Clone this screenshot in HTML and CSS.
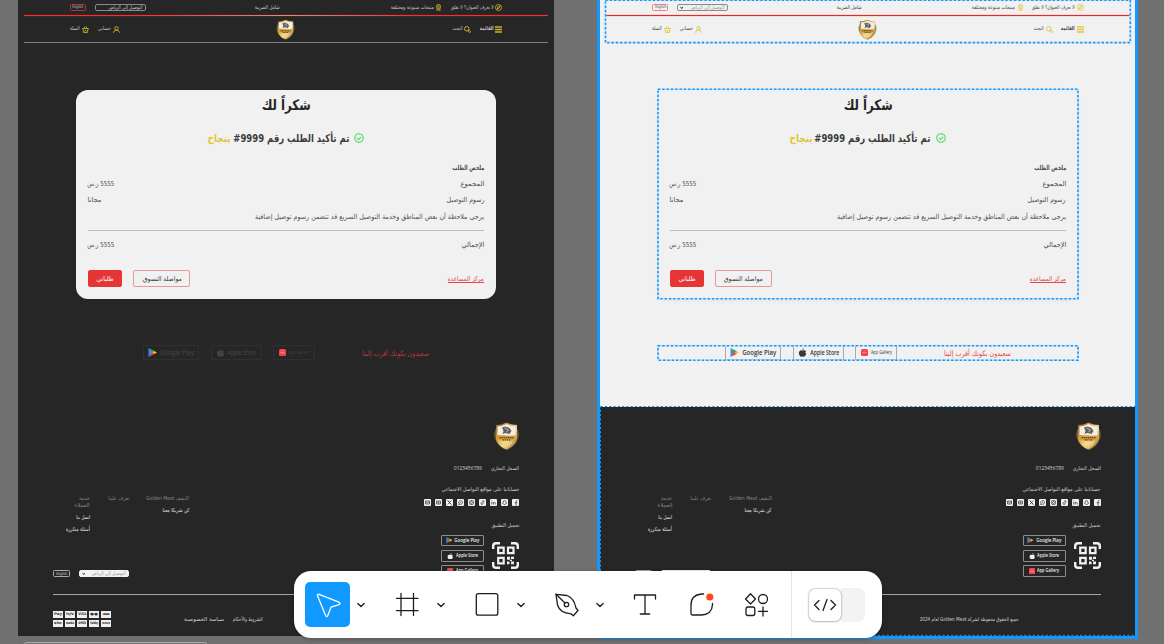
FILE: index.html
```html
<!DOCTYPE html>
<html lang="ar">
<head>
<meta charset="utf-8">
<title>Golden Meat</title>
<link rel="stylesheet" href="styles.css">
</head>
<body>
<svg width="0" height="0" class="defs">
  <defs>
    <linearGradient id="gold" x1="0" y1="0" x2="1" y2="1"><stop offset="0" stop-color="#8a6428"/><stop offset=".35" stop-color="#d9a441"/><stop offset=".6" stop-color="#f3d78c"/><stop offset="1" stop-color="#8a5a1c"/></linearGradient>
    <symbol id="logo" viewBox="0 0 26 28">
      <path d="M2 7Q-1 14 3 20Q7 26 13 28Q19 26 23 20Q27 14 24 7Z" fill="#8b6a35" opacity=".8"/>
      <path d="M2.500 3Q8 3 13 .5Q18 3 23.500 3V17Q22 24 13 27.500Q4 24 2.500 17Z" fill="url(#gold)"/>
      <path d="M4 4.500Q9 4 13 2Q17 4 22 4.500V13H4Z" fill="#f0eeea"/>
      <path d="M8.500 5.500L12 4.500L16 6L18 9L16 12L12 11L9 12L10 9Z" fill="#65605a"/>
      <path d="M11 6L15 8L13 10" stroke="#ddd" stroke-width=".7" fill="none"/>
      <path d="M4 14H22L21 18H5Z" fill="#d6a03e"/><path d="M6 15.800H20M9 18H17" stroke="#3c2a10" stroke-width="1.100" stroke-dasharray="1.500 .6"/>
      <path d="M6 19.500Q9 24 13 26Q18 23 20 19.500Z" fill="#f7d98a" opacity=".7"/>
    </symbol>
    <symbol id="compass" viewBox="0 0 14 14"><g fill="none" stroke="currentColor" stroke-width="1.700"><circle cx="7" cy="7" r="6"/><path d="M10 4L8.200 8.200L4 10L5.800 5.800Z"/></g></symbol>
    <symbol id="award" viewBox="0 0 14 14"><g fill="none" stroke="currentColor" stroke-width="1.700"><circle cx="7" cy="5" r="4.200"/><circle cx="7" cy="5" r="1.500"/><path d="M4 8.500V13.200L7 11.500L10 13.200V8.500"/></g></symbol>
    <symbol id="user" viewBox="0 0 14 14"><g fill="none" stroke="currentColor" stroke-width="1.800"><circle cx="7" cy="4.500" r="3.400"/><path d="M1 13.500Q1.500 8.500 7 8Q12.500 8.500 13 13.500"/></g></symbol>
    <symbol id="basket" viewBox="0 0 14 14"><g fill="none" stroke="currentColor" stroke-width="1.700"><path d="M.5 5H13.500M2 5L3 13H11L12 5M4 5L6 1M10 5L8 1M5.500 8L8.500 11M8.500 8L5.500 11"/></g></symbol>
    <symbol id="search" viewBox="0 0 14 14"><g fill="none" stroke="currentColor" stroke-width="1.900"><circle cx="5.500" cy="5.500" r="4.500"/><path d="M8.800 8.800L10.500 8.500L13.300 11.500L11.500 13.300L8.500 10.500Z"/></g></symbol>
    <symbol id="menu" viewBox="0 0 14 14"><path d="M0 2H14M0 7H14M0 12H14" stroke="currentColor" stroke-width="2.600"/></symbol>
    <symbol id="check" viewBox="0 0 18 18"><g fill="none" stroke="#49dc56" stroke-width="2"><circle cx="9" cy="9" r="7.600"/><path d="M5.300 9.300L8 11.800L12.800 6.800"/></g></symbol>
    <symbol id="play" viewBox="0 0 18 18"><path d="M1 0L9.500 9L1 18Z" fill="#4285f4"/><path d="M1 0L14 6.600L9.500 10Z" fill="#34a853"/><path d="M1 18L14 11.400L9.500 8Z" fill="#ea4335"/><path d="M12.500 5.800L18 9L12.500 12.200L9 9Z" fill="#fbbc04"/></symbol>
    <symbol id="apple" viewBox="0 0 18 18"><path d="M12 0Q12 3.500 8.800 4Q9 1 12 0ZM9 5.200Q13 3 16 6Q13 8.500 16.500 12Q14 17.500 11.500 17.500Q9 16.500 7 17.500Q4 18 2 12.500Q.5 7 4.500 5Q7 4.300 9 5.200Z" fill="currentColor"/></symbol>
    <symbol id="gallery" viewBox="0 0 18 18"><rect width="18" height="18" rx="4" fill="#f4434c"/><path d="M4 9.500H14" stroke="#ffd2d4" stroke-width="2" stroke-dasharray="2 .6"/><path d="M6 3.500Q9 7 12 3.500" fill="none" stroke="#ffa2a6"/></symbol>
    <symbol id="qr" viewBox="0 0 27 27"><g fill="none" stroke="#f1f1f1" stroke-width="2.400"><path d="M1.200 7V4Q1.200 1.200 4 1.200H8M19 1.200H23Q25.800 1.200 25.800 4V7M25.800 20V23Q25.800 25.800 23 25.800H19M8 25.800H4Q1.200 25.800 1.200 23V20"/><path d="M6.200 5.700H11.700V11.200H6.200ZM16 5.700H21.500V11.200H16ZM6.200 15.800H11.700V21.300H6.200Z" stroke-width="2.200"/></g><path d="M15 14.800H18V17.800H15ZM19 14.800H22V17H19ZM18 17.800H20V19H18ZM15 19.500H17.500V22.300H15ZM19 19.500H22V22.300H19Z" fill="#f1f1f1"/></symbol>
    <symbol id="caret" viewBox="0 0 8 8"><path d="M1 2L4 6L7 2" fill="none" stroke="currentColor" stroke-width="2"/></symbol>
  </defs>
</svg>

<template id="page">
  <header class="head">
    <div class="bar top">
      <span class="pill red"><b data-w="11">English</b></span>
      <span class="select"><svg><use href="#caret"/></svg><b data-w="34">التوصيل إلى الرياض</b></span>
      <b class="vat" data-w="25">شامل الضريبة</b>
      <span class="item award"><b data-w="43">منتجات متنوعة ومختلفة</b><svg><use href="#award"/></svg></span>
      <span class="item"><b data-w="43">لا تعرف العنوان؟ لا تقلق</b><svg><use href="#compass"/></svg></span>
    </div>
    <div class="stripe"></div>
    <div class="bar nav">
      <span class="item"><b data-w="10">السلة</b><svg><use href="#basket"/></svg></span>
      <span class="item account"><b data-w="13">حسابي</b><svg><use href="#user"/></svg></span>
      <svg class="brand"><use href="#logo"/></svg>
      <span class="item find"><b data-w="10">البحث</b><svg><use href="#search"/></svg></span>
      <span class="item"><b class="strong" data-w="14">القائمة</b><svg><use href="#menu"/></svg></span>
    </div>
  </header>
  <main class="card">
    <div class="title"><b data-w="49">شكراً لك</b></div>
    <div class="confirm"><b class="gold" data-w="23">بنجاح</b><b data-w="116">تم تأكيد الطلب رقم 9999#</b><svg><use href="#check"/></svg></div>
    <div class="line end"><b class="strong" data-w="32">ملخص الطلب</b></div>
    <div class="line"><b data-w="27">5555 ر.س</b><b data-w="24">المجموع</b></div>
    <div class="line"><b data-w="14">مجانا</b><b data-w="38">رسوم التوصيل</b></div>
    <div class="line end"><b data-w="229">يرجى ملاحظة أن بعض المناطق وخدمة التوصيل السريع قد تتضمن رسوم توصيل إضافية</b></div>
    <div class="line total"><b data-w="27">5555 ر.س</b><b data-w="23">الإجمالي</b></div>
    <div class="actions">
      <span class="btn solid"><b data-w="17">طلباتي</b></span>
      <span class="btn"><b data-w="39">مواصلة التسوق</b></span>
      <span class="help"><b data-w="36">مركز المساعدة</b></span>
    </div>
  </main>
  <section class="apps">
    <span class="app google"><svg><use href="#play"/></svg><b data-w="34">Google Play</b></span>
    <span class="app store"><svg><use href="#apple"/></svg><b data-w="29">Apple Store</b></span>
    <span class="app huawei"><svg><use href="#gallery"/></svg><b data-w="21">App Gallery</b></span>
    <b class="happy" data-w="67">سعيدون بكونك أقرب إلينا</b>
  </section>
  <footer class="foot">
    <div class="upper">
      <div class="side">
        <div class="links">
          <div class="col c1"><b class="dim" data-w="11">خدمة</b><b class="dim" data-w="15">العملاء</b><b class="link" data-w="14">اتصل بنا</b><b class="link" data-w="24">أسئلة متكررة</b></div>
          <div class="col c2"><b class="dim" data-w="21">تعرف علينا</b></div>
          <div class="col c3"><b class="dim" data-w="43">اكتشف Golden Meat</b><b class="link" data-w="27">كن شريكا معنا</b></div>
        </div>
        <div class="prefs"><span class="pill"><b data-w="11">English</b></span><span class="select white"><svg><use href="#caret"/></svg><b data-w="34">التوصيل إلى الرياض</b></span></div>
      </div>
      <div class="about">
        <svg class="crest"><use href="#logo"/></svg>
        <div class="reg"><b data-w="28">0123456789</b><b data-w="28">السجل التجاري</b></div>
        <div class="follow"><b data-w="78">حساباتنا على مواقع التواصل الاجتماعي</b></div>
        <div class="social"></div>
        <div class="dl"><b data-w="28">تحميل التطبيق</b></div>
        <div class="get">
          <div class="stack">
            <span class="badge"><svg><use href="#play"/></svg><b data-w="25">Google Play</b></span>
            <span class="badge"><svg><use href="#apple"/></svg><b data-w="22">Apple Store</b></span>
            <span class="badge"><svg><use href="#gallery"/></svg><b data-w="22">App Gallery</b></span>
          </div>
          <svg class="qr"><use href="#qr"/></svg>
        </div>
      </div>
    </div>
    <div class="lower">
      <div class="pay"></div>
      <b class="privacy" data-w="40">سياسة الخصوصية</b>
      <b class="terms" data-w="30">الشروط والأحكام</b>
      <b class="copy" data-w="99">جميع الحقوق محفوظة لشركة Golden Meat لعام 2024</b>
    </div>
  </footer>
</template>

<div class="canvas">
  <div class="frame dark"></div>
  <div class="frame light"></div>
  <svg class="guides" width="1164" height="644">
    <g fill="none" stroke="#c3e1f8" stroke-width="1.600">
      <rect x="605.500" y=".3" width="524.800" height="42.300"/><rect x="658" y="89.300" width="420" height="209.500"/><rect x="658" y="345.700" width="420" height="14.500"/>
    </g>
    <g fill="none" stroke="#1597fb" stroke-width="1.600" stroke-dasharray="2.300 2">
      <rect x="605.500" y=".3" width="524.800" height="42.300"/><rect x="658" y="89.300" width="420" height="209.500"/><rect x="658" y="345.700" width="420" height="14.500"/><rect x="600.500" y="406.500" width="535" height="228.800" stroke-width="1"/>
    </g>
  </svg>
  <div class="next-frame"></div>
  <nav class="tools">
    <span class="tool on"><svg viewBox="0 0 45 45"><path d="M12.500 13.800Q12 11.900 14 12.300L34 20.200Q36 21.500 34 22.600L26 25.200L22.800 33.500Q21.800 35.500 20.600 33.500Z"/></svg></span>
    <span class="more"><svg viewBox="0 0 8 8"><path d="M1.500 2.800L4 5.200L6.500 2.800"/></svg></span>
    <span class="tool"><svg viewBox="0 0 45 45"><path d="M16 11.500V33.500M28.500 11.500V33.500M11.500 16.300H33M11.500 28.700H33"/></svg></span>
    <span class="more"><svg viewBox="0 0 8 8"><path d="M1.500 2.800L4 5.200L6.500 2.800"/></svg></span>
    <span class="tool"><svg viewBox="0 0 45 45"><rect x="11.300" y="11.700" width="21.500" height="21.500" rx="2"/></svg></span>
    <span class="more"><svg viewBox="0 0 8 8"><path d="M1.500 2.800L4 5.200L6.500 2.800"/></svg></span>
    <span class="tool"><svg viewBox="0 0 45 45"><path d="M12 12.300L23 13.500Q30 16 32 26L34 28.500L29.300 33.800L27 31.800Q16 31 13.500 23Z"/><path d="M12 12.300L21 21"/><circle cx="22.500" cy="22.500" r="2.200"/></svg></span>
    <span class="more last"><svg viewBox="0 0 8 8"><path d="M1.500 2.800L4 5.200L6.500 2.800"/></svg></span>
    <span class="tool"><svg viewBox="0 0 45 45"><path d="M12.500 17V13H33.500V17M23 13V32M18.300 32H27.700"/></svg></span>
    <span class="tool comment"><svg viewBox="0 0 45 45"><path d="M24.500 12H22.500Q12 13 12 23V31.500Q12 33 13.500 33H22.500Q33 32.500 33.500 22.500V21.500"/><circle cx="30.800" cy="15" r="3.600" class="dot"/></svg></span>
    <span class="tool shapes"><svg viewBox="0 0 45 45"><path d="M16.500 11.800L21.500 17L16.500 22L11.500 17Z"/><circle cx="29" cy="17" r="4.500"/><rect x="12" y="25" width="8.800" height="8.500" rx="2"/><path d="M29 24.800V34M24.500 29.400H33.500"/></svg></span>
    <span class="dev"><span class="knob"><svg viewBox="0 0 32 32"><path d="M10 11.500L5.500 16L10 20.500M22 11.500L26.500 16L22 20.500M18 10.500L14 21.500"/></svg></span></span>
  </nav>
</div>
<script src="app.js"></script>
</body>
</html>
```

FILE: styles.css
```css
* { box-sizing: border-box; }
body { margin: 0; overflow: hidden; font-family: "DejaVu Sans", sans-serif; }
.defs { position: absolute; }
.canvas { position: relative; width: 1164px; height: 644px; background: #707070; overflow: hidden; }
b { display: inline-block; flex: none; font-weight: normal; white-space: nowrap; line-height: 1; direction: rtl; text-align: right; }
b span { display: inline-block; transform-origin: 100% 50%; }
b.strong { font-weight: bold; }
svg { flex: none; display: block; }

.frame { position: absolute; top: 0; left: 18px; width: 535.5px; height: 635.5px; background: #262626; color: #c6c6c6; }
.frame.light { left: 600.2px; width: 535px; background: #f1f1f1; color: #444; box-shadow: 0 0 0 3px #1597fb; }

.head { margin: 0 5.5px; height: 43px; border-bottom: 1px solid #7f8080; font-size: 5.4px; }
.light .head { border-color: transparent; }
.bar { display: flex; align-items: center; padding-right: 45.7px; padding-left: 46.2px; }
.top { height: 15px; }
.stripe { height: 1px; background: linear-gradient(90deg, #ff2a30, #ff2a30 22%, #e08a8a 50%, #ff2a30 75%, #ff2a30); box-shadow: 0 0 1px #ff2a30; }
.light .stripe { background: #ee2428; }
.nav { height: 26px; }
.item { display: flex; align-items: center; gap: 2px; }
.item svg { width: 7px; height: 7px; color: #ccb22b; }
.light .item svg { color: #e2c640; }
.pill { display: flex; align-items: center; justify-content: center; width: 16.5px; height: 6.6px; border: 1px solid #aaa; border-radius: 1.5px; font-size: 4.2px; }
.pill.red { border-color: #a8393b; }
.light .pill.red { border-color: #e88080; }
.select { display: flex; align-items: center; justify-content: space-between; width: 50.5px; height: 7.5px; padding: 0 2px; border: 1px solid #8b8b8b; border-radius: 2px; font-size: 5.4px; }
.select svg { width: 3.5px; height: 3.5px; }
.top .select { margin-left: 9px; }
.dark .top .select svg { visibility: hidden; }
.light .top .select b { color: #999; }
.light .top .select svg { color: #222; }
.vat { margin-left: 109px; }
.item.award { margin: 0 8px 0 auto; }
.item.account { margin-left: 9px; }
.brand { width: 19px; height: 21px; margin-left: 156px; }
.find { margin: 0 8px 0 auto; }

.card { display: flex; flex-direction: column; width: 419.500px; height: 209.500px; margin: 46.700px 0 0 58.200px; padding: 0 11.500px; border-radius: 12px; background: #f1f1f1; color: #4e4e4e; font-size: 7px; }
.light .card { margin-left: 57.900px; box-shadow: 0 1px 5px rgba(0, 0, 0, .06); }
.title { display: flex; justify-content: center; align-items: center; height: 31px; padding-top: 1px; font-size: 14.500px; color: #262626; }
.title b, .confirm b { font-weight: bold; }
.confirm { display: flex; justify-content: center; align-items: center; gap: 2px; height: 35px; font-size: 11px; color: #3b3b3b; }
.confirm svg { width: 10px; height: 10px; margin-left: 3px; }
.confirm .gold { color: #e0c63a; }
.line { display: flex; justify-content: space-between; align-items: center; height: 16.300px; }
.line b { padding-top: 1px; }
.line.end { justify-content: flex-end; }
.confirm + .line { margin-top: 4px; }
.line.total { margin-top: 5px; height: 28px; padding-top: 1px; border-top: 1px solid #bdbdbd; }
.actions { display: flex; align-items: center; margin-top: 12px; font-size: 6.500px; }
.btn { display: flex; justify-content: center; align-items: center; width: 57px; height: 17.500px; padding-top: 1px; border: 1px solid #e59a9a; border-radius: 2px; color: #333; }
.btn.solid { width: 34.500px; margin-right: 11.200px; border-color: #e53535; background: #e53535; color: #fff; }
.help { margin-left: auto; margin-top: 2px; color: #e24a4a; border-bottom: 1px solid #e24a4a; display: flex; }

.apps { display: flex; align-items: center; height: 15px; margin: 46.300px 0 0 125.300px; font-size: 6.500px; }
.app { display: flex; align-items: center; justify-content: center; gap: 3px; height: 15px; border: 1px solid #303030; color: #424242; font-family: "Open Sans", sans-serif; }
.light .app { border-color: #aaa; color: #383838; }
.app svg { width: 9px; height: 9px; }
.google { width: 56px; font-size: 7.500px; }
.google b { font-weight: 600; }
.store { width: 51px; margin-left: 11.500px; }
.store b, .badge b { font-weight: 600; }
.huawei { width: 42px; margin-left: 11.500px; font-size: 5px; }
.huawei svg { width: 7px; height: 7px; }
.happy { margin: 1px 0 0 46.500px; font-size: 7.500px; color: #b93838; }
.light .happy { color: #e24a4a; }

.foot { height: 229px; margin-top: 46.500px; padding: 15px 34.500px 0 35px; background: #262626; color: #d2d2d2; font-size: 5.400px; }
.upper { display: flex; justify-content: space-between; height: 173px; border-bottom: 1px solid #a5a5a5; }
.side { display: flex; flex-direction: column; justify-content: space-between; padding: 74.500px 0 16.500px; }
.links { display: flex; }
.col { display: flex; flex-direction: column; align-items: flex-end; gap: 1.600px; }
.c1 { width: 37px; }
.c2 { width: 39px; }
.c3 { width: 60.500px; }
.dim { color: #858585; }
.link { margin-top: 5px; color: #e4e4e4; }
.c1 .link { margin-top: 4.700px; }
.prefs { display: flex; align-items: center; gap: 9px; }
.select.white { background: #f1f1f1; border-color: #f1f1f1; color: #999; }
.select.white svg { color: #333; }
.about { display: flex; flex-direction: column; align-items: flex-end; }
.crest { width: 27px; height: 28px; margin-right: -1px; }
.reg { display: flex; gap: 9px; margin-top: 16px; }
.reg b:first-child { font-family: "Open Sans", sans-serif; }
.follow { margin-top: 15px; }
.social { display: flex; gap: 4px; margin-top: 6px; }
.social svg { width: 7px; height: 7px; }
.dl { margin-top: 16px; }
.get { display: flex; align-items: center; gap: 8px; margin-top: 6.500px; }
.stack { display: flex; flex-direction: column; gap: 3.800px; }
.badge { display: flex; justify-content: center; align-items: center; gap: 2px; width: 43px; height: 11.500px; border: 1px solid #8d8d8d; border-radius: 1px; color: #eee; font-family: "Open Sans", sans-serif; }
.badge svg { width: 6.500px; height: 6.500px; }
.qr { width: 27px; height: 27px; }
.lower { display: flex; align-items: center; height: 49px; }
.pay { display: grid; grid-template-columns: repeat(5, 10px); gap: 2px; }
.card-mark { display: flex; align-items: center; justify-content: center; height: 7px; background: #efefef; color: #333; font-size: 3.500px; }
.card-mark b { font-weight: bold; }
.privacy { margin-left: 73px; }
.terms { margin-left: 9px; }
.copy { margin-left: 74px; }

.guides { position: absolute; left: 0; top: 0; }
.next-frame { position: absolute; left: 23px; top: 642px; width: 185px; height: 12px; border: 1px solid #aaa; border-radius: 4px; }

.tools { position: absolute; left: 294px; top: 571px; display: flex; align-items: center; width: 588px; height: 67px; padding-left: 11px; border-radius: 17px; background: #fff; box-shadow: 0 1px 4px rgba(0, 0, 0, .3); }
.tools svg { fill: none; stroke: #1e1e1e; stroke-width: 1.300; stroke-linecap: round; stroke-linejoin: round; }
.tool { flex: none; width: 45px; height: 45px; border-radius: 5px; }
.tool.on { background: #1199ff; }
.tool.on svg { stroke: #fff; }
.more { flex: none; width: 22px; padding-left: 6px; margin-right: 12.800px; }
.more.last { margin-right: 11px; }
.tools .more svg { width: 10px; height: 10px; stroke-width: 1.100; }
.tool.comment { margin-left: 11.500px; }
.tool.shapes { margin-left: 10px; }
.tools .dot { fill: #ff4a1c; stroke: none; }
.dev { display: flex; align-items: center; align-self: stretch; margin-left: 12px; padding-left: 17.500px; border-left: 1px solid #e4e4e4; }
.dev::after { content: ""; width: 24px; height: 34px; background: #f3f3f3; border-radius: 0 7px 7px 0; }
.knob { width: 32px; height: 32px; border-radius: 6px; background: #fff; box-shadow: 0 0 2px rgba(0, 0, 0, .5), 0 1px 2px rgba(0, 0, 0, .15); z-index: 1; }
```

FILE: app.js
```js
const socialMarks = [
  '<path d="M3 5L7 8L11 5M3 4H11V10H3Z"/>',
  '<path d="M3 4H11V10H3ZM6 5.500L8.500 7L6 8.500Z"/>',
  '<path d="M3 3L11 11M11 3L3 11M4 3L10 11"/>',
  '<path d="M3 11L4 8.500A3.800 3.800 0 1 1 6 10.300ZM6 6L8.500 8"/>',
  '<circle cx="7" cy="7" r="2"/><rect x="3" y="3" width="8" height="8" rx="2"/>',
  '<path d="M8 2.500V9A2 2 0 1 1 6 7M8 3Q9 5.500 11 5.500"/>',
  '<path d="M3.500 6V11M3.500 3V4.500M6.500 11V6M6.500 8Q9 4.500 10.500 8V11"/>',
  '<path d="M7 3Q9.500 3 9.500 6L11 9L9 10L7 11L5 10L3 9L4.500 6Q4.500 3 7 3Z"/>',
  '<path d="M11 3Q8 2.500 8 5.500V14M5.500 7.500H11"/>'
];
const cards = ['Pay', 'PayPal', 'VISA', '●●', '▬', 'stc', 'mada', 'AMEX', 'tabby', 'tamara'];

document.querySelectorAll('.frame').forEach(frame => {
  frame.append(document.getElementById('page').content.cloneNode(true));
  frame.querySelector('.social').innerHTML = socialMarks.map(mark =>
    `<svg viewBox="0 0 14 14"><rect width="14" height="14" rx="2" fill="#f1f1f1"/><g fill="none" stroke="#262626" stroke-width="1.300">${mark}</g></svg>`).join('');
  frame.querySelector('.pay').innerHTML = cards.map(name =>
    `<span class="card-mark"><b data-w="8">${name}</b></span>`).join('');
});

document.querySelectorAll('b[data-w]').forEach(label => {
  const text = document.createElement('span');
  text.append(...label.childNodes);
  label.append(text);
  const width = Number(label.dataset.w);
  const natural = text.getBoundingClientRect().width;
  label.style.width = width + 'px';
  text.style.transform = `scaleX(${width / natural})`;
});
```
